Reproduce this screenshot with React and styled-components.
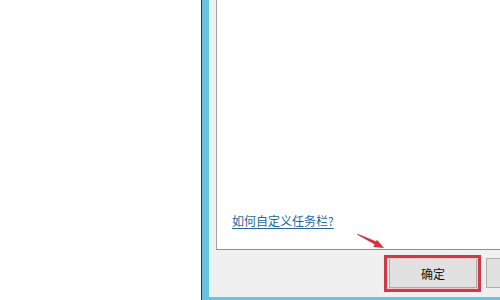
import React from 'react';
import styled, { createGlobalStyle } from 'styled-components';

const GlobalStyle = createGlobalStyle`
  html, body {
    margin: 0;
    padding: 0;
    background: #ffffff;
    overflow: hidden;
  }
  body {
    font-family: "Noto Sans CJK SC", "Noto Sans", sans-serif;
  }
`;

const Page = styled.div`
  display: flex;
  width: 500px;
  height: 300px;
  overflow: hidden;
  background: #ffffff;
  position: relative;
`;

const Gutter = styled.div`
  flex: 0 0 201px;
`;

const WindowFrame = styled.div`
  flex: 0 0 340px;
  display: flex;
  flex-direction: column;
  border-left: 1px solid #1f3f50;
  background: #68c4de;
  padding: 0 0 3px 7px;
`;

const Client = styled.div`
  flex: 1;
  display: flex;
  flex-direction: column;
  background: #f0f0f0;
  border-left: 2px solid #e2f3f9;
  padding-left: 5px;
`;

const Panel = styled.div`
  flex: 0 0 250px;
  box-sizing: border-box;
  display: flex;
  flex-direction: column;
  justify-content: flex-end;
  align-items: flex-start;
  background: #ffffff;
  border-left: 1px solid #a3a3a3;
  border-bottom: 1px solid #8e8e8e;
  padding: 0 0 20px 15px;
`;

const HelpLink = styled.a`
  font-size: 12px;
  line-height: 16px;
  color: #1d6a9b;
  text-decoration: underline;
  text-underline-offset: 2px;
  cursor: pointer;
`;

const Footer = styled.div`
  flex: 1;
  display: flex;
  align-items: flex-start;
  gap: 9px;
  padding: 8px 0 0 173px;
`;

const Highlight = styled.span`
  position: relative;
  display: inline-flex;

  &::after {
    content: '';
    position: absolute;
    left: -5px;
    top: -3px;
    right: -4px;
    bottom: -4px;
    border: 3px solid #cd3b46;
    box-shadow: inset 0 0 0 1px #f2c9cc;
  }
`;

const Button = styled.button`
  flex: 0 0 88px;
  width: 88px;
  height: 30px;
  box-sizing: border-box;
  background: #e1e1e1;
  border: 1px solid #adadad;
  font-family: "Noto Sans CJK SC", "Noto Sans", sans-serif;
  font-size: 12px;
  color: #111111;
  padding: 0;
`;

const Arrow = styled.svg`
  position: absolute;
  left: 354px;
  top: 231px;
`;

export default function App() {
  return (
    <>
      <GlobalStyle />
      <Page>
        <Gutter />
        <WindowFrame>
          <Client>
            <Panel>
              <HelpLink>如何自定义任务栏?</HelpLink>
            </Panel>
            <Footer>
              <Highlight>
                <Button>确定</Button>
              </Highlight>
              <Button>取消</Button>
            </Footer>
          </Client>
        </WindowFrame>
        <Arrow width="36" height="22" viewBox="0 0 36 22">
          <path d="M3 2.5 L3.8 4 L22.5 14.5 L23.5 11 Z" fill="#d8303c" />
          <path d="M30 17 L19.3 16 L22.9 8.8 Z" fill="#d8303c" />
        </Arrow>
      </Page>
    </>
  );
}
